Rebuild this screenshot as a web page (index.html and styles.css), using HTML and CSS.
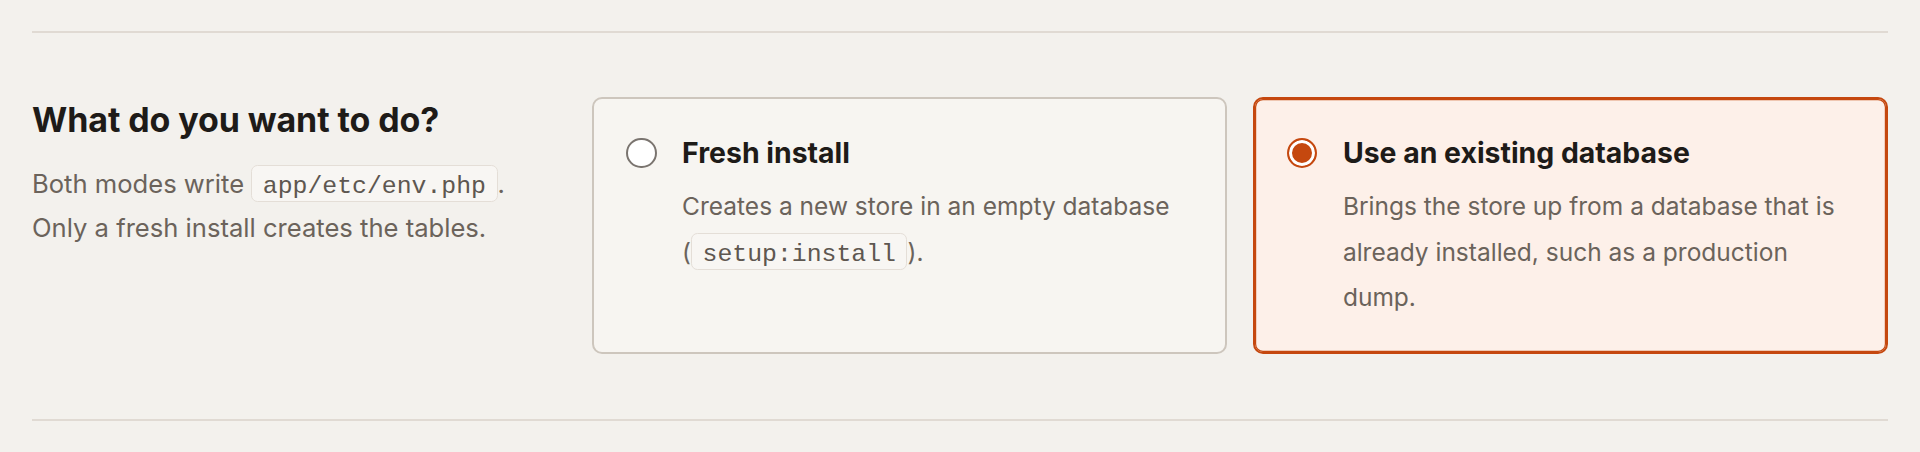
FILE: index.html
```html
<!DOCTYPE html>
<html lang="en">
<head>
<meta charset="utf-8">
<title>Install mode</title>
<link rel="stylesheet" href="styles.css">
</head>
<body>
<main class="page">
  <section class="step">
    <div class="intro">
      <h2 class="intro-title">What do you want to do?</h2>
      <p class="intro-text">Both modes write <code class="code">app/etc/env.php</code>. Only a fresh install creates the tables.</p>
    </div>
    <div class="options">
      <label class="option">
        <span class="radio"></span>
        <span class="option-body">
          <span class="option-title">Fresh install</span>
          <span class="option-desc">Creates a new store in an empty database (<code class="code">setup:install</code>).</span>
        </span>
      </label>
      <label class="option option--selected">
        <span class="radio radio--checked"></span>
        <span class="option-body">
          <span class="option-title">Use an existing database</span>
          <span class="option-desc">Brings the store up from a database that is already installed, such as a production dump.</span>
        </span>
      </label>
    </div>
  </section>
</main>
</body>
</html>
```

FILE: styles.css
```css
html, body {
  margin: 0;
  padding: 0;
}

body {
  background: #f3f1ed;
  font-family: Inter, "Noto Sans", sans-serif;
  color: #1e1b18;
}

.page {
  padding: 31px 32px 0;
}

.step {
  display: grid;
  grid-template-columns: 512px 1fr;
  column-gap: 48px;
  padding: 64px 0 65px;
  border-top: 2px solid #e0dad3;
  border-bottom: 2px solid #e0dad3;
}

.intro-title {
  margin: 2px 0 0;
  font-size: 34px;
  line-height: 41.6px;
  font-weight: 700;
  letter-spacing: -0.1px;
  color: #1e1b18;
}

.intro-text {
  margin: 22px 0 0;
  font-size: 25.6px;
  line-height: 42.4px;
  color: #6b635b;
}

.code {
  font-family: "Liberation Mono", "DejaVu Sans Mono", monospace;
  font-size: 24.8px;
  color: #5e5750;
  background: #f8f6f3;
  border: 1.5px solid #e4ded7;
  border-radius: 6.4px;
  padding: 6px 10.5px 1px;
}

.options {
  display: grid;
  grid-template-columns: 1fr 1fr;
  column-gap: 25.6px;
}

.option {
  display: flex;
  align-items: flex-start;
  gap: 25.6px;
  padding: 32px;
  background: #f7f5f1;
  border: 2px solid #cdc6bd;
  border-radius: 10px;
}

.option--selected {
  background: #fdf0e9;
  border-color: #c5480f;
  box-shadow: inset 0 0 0 1.2px #c5480f;
}

.radio {
  flex: none;
  box-sizing: border-box;
  width: 30.5px;
  height: 30.5px;
  margin-top: 6.8px;
  border: 2px solid #7a746f;
  border-radius: 50%;
  background: #ffffff;
}

.radio--checked {
  border-color: #c5480f;
  background: #c5480f;
  box-shadow: inset 0 0 0 3px #ffffff;
}

.option-body {
  display: flex;
  flex-direction: column;
  min-width: 0;
}

.option-title {
  font-size: 28.4px;
  line-height: 44px;
  font-weight: 700;
  color: #1e1b18;
}

.option-desc {
  margin-top: 9.4px;
  font-size: 24.5px;
  line-height: 45.3px;
  color: #6b635b;
}

.option-desc .code {
  font-size: 24.8px;
}
```
